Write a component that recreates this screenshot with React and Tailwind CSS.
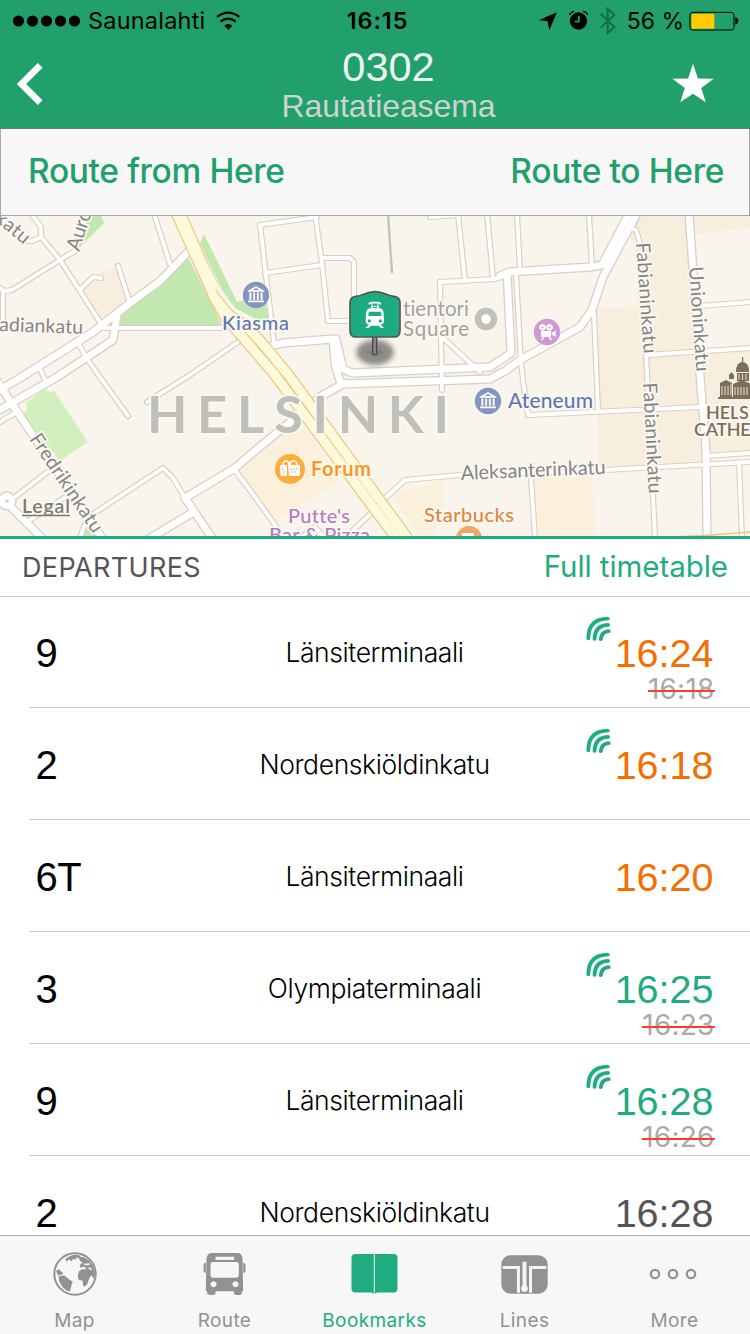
import React from "react";

const thin = [
  "32,215 41,227 41,237 60,260 100,322",
  "41,237 33,241 25,241",
  "0,288 4,291 12,290 60,260 75,251",
  "3,291 3,322",
  "80,290 93,277 101,278",
  "118,266 129,300",
  "154,214 170,264",
  "78,343 86,357 97,373 128,416",
  "40,369 46,382",
  "147,402 190,375 238,342",
  "0,422 15,413",
  "27,522 70,494",
  "15,497 50,470",
  "80,538 87,518 163,468 173,478 185,498",
  "233,468 250,490 275,525 283,538",
  "260,225 274,343",
  "260,225 317,217",
  "315,214 322,263 328,321 352,321",
  "265,273 322,265",
  "322,258 350,258 354,262 354,300",
  "430,217 458,215",
  "440,282 442,390",
  "440,282 495,279 502,276",
  "458,214 465,281",
  "487,214 493,278",
  "443,338 480,372",
  "517,214 520,270",
  "516,275 521,362 523,380 528,415 700,407",
  "589,214 592,267",
  "594,313 598,411",
  "630,228 636,230 640,243",
  "646,353 655,538",
  "647,355 750,348",
  "700,306 750,302",
  "706,456 750,453",
  "380,503 405,480 460,475 605,470 750,462",
  "739,462 742,538",
  "345,538 383,502",
  "531,478 535,538",
  "300,538 315,527 325,538",
  "100,328 225,328",
];

const wide = [
  "-4,392 20,378 93,332 130,303 160,281 190,250",
  "-4,412 57,377 113,340 117,315",
  "-2,382 12,404 102,538",
  "12,508 42,538",
  "185,498 212,538",
  "147,540 192,513",
  "185,498 235,468 250,455 307,408 323,395 345,383",
  "255,350 283,343 333,339 335,365 341,384 490,379 505,371 520,360 580,327 592,310 603,277 640,208",
  "336,339 343,369 352,373 490,367 511,353 507,273",
  "500,276 510,272 590,267 602,265 632,208",
  "689,214 693,270 700,375 706,450 707,538",
];

const highway = [
  "173,206 199,262 214,297 226,318 245,340 275,375 396,538",
  "214,297 228,314 248,328 262,343 288.5,375 407.5,538",
];

function Roads() {
  const layer = (list, color, w) =>
    list.map((p, i) => (
      <polyline key={color + w + i} points={p} fill="none" stroke={color} strokeWidth={w} strokeLinejoin="round" strokeLinecap="round" />
    ));
  return (
    <g>
      {layer(thin, "#d9d0c5", 6.2)}
      {layer(wide, "#d9d0c5", 9.4)}
      <circle cx="7" cy="501" r="9" fill="#fff" stroke="#d9d0c5" strokeWidth="1.4" />
      {layer(thin, "#ffffff", 3.8)}
      {layer(wide, "#ffffff", 6.8)}
      <circle cx="7" cy="501" r="1.8" fill="#d9d0c5" />
      <polyline points="177,210 200,262 212,288" fill="none" stroke="#f3c47c" strokeWidth="14.6" />
      {layer(highway, "#f3c47c", 11.6)}
      {layer(highway, "#fcfada", 9.2)}
      <polyline points="177,210 200,262 214,291" fill="none" stroke="#fcfada" strokeWidth="12.4" />
      <polyline points="388,214 392,273" fill="none" stroke="#c4c4c4" strokeWidth="2.4" />
      <polyline points="655,538 712,535 750,532" fill="none" stroke="#f3c47c" strokeWidth="1.5" />
    </g>
  );
}

function Label({ x, y, w, size, fill, weight = 400, rotate, children }) {
  return (
    <text
      x={x}
      y={y}
      textLength={w}
      fontSize={size}
      fontWeight={weight}
      fill={fill}
      stroke="#fbf8f2"
      strokeWidth="3.5"
      strokeLinejoin="round"
      paintOrder="stroke"
      transform={rotate ? `rotate(${rotate} ${x} ${y})` : undefined}
      style={{ fontFamily: 'Lato, "Open Sans", sans-serif', fontVariantLigatures: "none" }}
    >
      {children}
    </text>
  );
}

function Museum({ cx, cy }) {
  return (
    <g transform={`translate(${cx} ${cy})`}>
      <circle r="13.2" fill="#8694c0" />
      <g fill="#fff">
        <path d="M-8.3 -4.2 0 -9 8.3 -4.2v1h-16.6z" />
        <path d="M-6.6-2.6h2v7.4h-2zM-2.8-2.6h1.9v7.4h-1.9zM.9-2.6h1.9v7.4H.9zM4.6-2.6h2v7.4h-2zM-8 5.4H8v1.8H-8z" />
      </g>
      <path d="M-3.5-5 0-7 3.5-5z" fill="#8694c0" />
    </g>
  );
}

function TramPin() {
  return (
    <g transform="translate(250 210) scale(0.33333)">
      <ellipse cx="375" cy="427" rx="56" ry="38" fill="#555" opacity="0.65" filter="url(#soft)" />
      <ellipse cx="375" cy="427" rx="26" ry="7" fill="#777" opacity="0.7" />
      <rect x="368" y="378" width="12" height="56" fill="#858585" stroke="#4a4a4a" strokeWidth="4" />
      <path
        d="M318 259C338 259 346 245 375 245C404 245 412 259 432 259Q450 261 450 279V362Q450 381 431 381H319Q300 381 300 362V279Q300 261 318 259Z"
        fill="#1dab80"
        stroke="#555"
        strokeWidth="5"
      />
      <g fill="none" stroke="#fff" strokeWidth="5">
        <path d="M357 283Q359 278 365 278H384Q390 278 392 283" />
        <path d="M368 280 364 289H386L382 280" strokeWidth="3" />
        <path d="M366 289V297M384 289V297" />
      </g>
      <path
        fillRule="evenodd"
        fill="#fff"
        d="M360 295H390Q400 297 401 310L402 333Q402 342 392 344L402 354H393L386 347H363L356 354H346L357 344Q347 342 347 333L348 310Q349 297 360 295ZM358 305Q355 306 355 318H394Q394 306 391 305ZM358 328A5 5 0 1 0 358.1 328ZM391 328A5 5 0 1 0 391.1 328Z"
      />
    </g>
  );
}

function CityMap() {
  return (
    <svg viewBox="0 216 750 320" className="block h-[320px] w-full shrink-0 bg-[#f9f4ec]">
      <defs>
        <filter id="soft" x="-30%" y="-30%" width="160%" height="160%">
          <feGaussianBlur stdDeviation="8" />
        </filter>
      </defs>
      <g fill="#f7eedd">
        <path d="M83 290 95 275 117 266 128 298 134 293 100 322Z" />
        <path d="M642 214H750V228L694 234 702 350 750 348V453L706 455V466L599 466 594 309 637 307 638 260 630 235Z" />
      </g>
      <g fill="#fbf0da">
        <path d="M535 478 592 477 596 536H537Z" />
        <path d="M392 495 441 480 444 508 432 536H420Z" />
        <path d="M292 428 237 470 278 526 280 518 340 480 307 430Z" />
      </g>
      <g fill="#c2e7af">
        <path d="M188 257 160 282 130 305 106 325H222Z" />
        <path d="M204 234 200 243 222 290 235 308 267 325 268 317 265 295 252 298 237 302Z" />
        <path d="M88 216 77 250 104 223 101 216Z" />
        <path d="M84 529 100 528 106 536H80Z" />
      </g>
      <path d="M45 389 50 392 54 391 88 442 60 461 23 415 27 410 26 403Z" fill="#d2f0be" />
      <Roads />

      <Label x={147} y={433} w={302} size={52.5} weight={700} fill="#bfbfbb">HELSINKI</Label>
      <Label x={-6} y={220} w={39} size={19.5} fill="#858585" rotate={40}>katu</Label>
      <Label x={79} y={252} w={42} size={20} fill="#858585" rotate={-72}>Auro</Label>
      <Label x={-1} y={331} w={84} size={19.5} fill="#858585" rotate={2}>adiankatu</Label>
      <Label x={29} y={439} w={115} size={19.5} fill="#858585" rotate={56}>Fredrikinkatu</Label>
      <Label x={636} y={243} w={111} size={19.5} fill="#858585" rotate={86}>Fabianinkatu</Label>
      <Label x={643} y={383} w={111} size={19.5} fill="#858585" rotate={87}>Fabianinkatu</Label>
      <Label x={689} y={267} w={105} size={19.5} fill="#858585" rotate={86}>Unioninkatu</Label>
      <Label x={461} y={480} w={145} size={20} fill="#858585" rotate={-2.5}>Aleksanterinkatu</Label>

      <Museum cx={256} cy={295} />
      <Label x={222} y={330} w={67} size={20} weight={500} fill="#5f76b2">Kiasma</Label>
      <Museum cx={488} cy={401} />
      <Label x={508} y={408} w={85} size={21} weight={500} fill="#5f76b2">Ateneum</Label>

      <Label x={403} y={316} w={66} size={20.5} fill="#a2a19e">tientori</Label>
      <Label x={403} y={335.5} w={66} size={20.5} fill="#a2a19e">Square</Label>
      <circle cx="486" cy="319" r="8" fill="#fff" stroke="#c2c0ba" strokeWidth="6.4" />

      <circle cx="547" cy="332" r="13.2" fill="#ce9ad2" />
      <g fill="#fff">
        <path fillRule="evenodd" d="M542.5 324a3.4 3.4 0 1 0 .01 0zm0 2.4a1 1 0 1 1-.01 0zM549.5 324a3.4 3.4 0 1 0 .01 0zm0 2.4a1 1 0 1 1-.01 0z" />
        <path d="M541 331h10v6h-10zM551.7 333l4-2.5v6.5l-4-2.5z" />
        <path d="M544 337l-2.5 3M549 337l2.5 3" stroke="#fff" strokeWidth="1.3" />
      </g>

      <circle cx="290" cy="469" r="15" fill="#ffab3d" />
      <g fill="#fff">
        <path d="M280 465h7v11h-6.5zM288 465h12v9q0 2-2 2h-9z" />
        <path d="M283 465q0-4 3-4t3 4M290 465q0-4 3.5-4t3.5 4" fill="none" stroke="#fff" strokeWidth="1.5" />
      </g>
      <path d="M290 469h2M293 469h2M296 469h2M291 472h2M294 472h2M282 469h2M283 472h2" stroke="#ffab3d" strokeWidth="1.2" />
      <Label x={311} y={476} w={60} size={20} weight={700} fill="#f8981d">Forum</Label>

      <Label x={288} y={523} w={62} size={20} weight={500} fill="#b87cbd">Putte's</Label>
      <Label x={269} y={542} w={101} size={20} weight={500} fill="#b87cbd">Bar &amp; Pizza</Label>
      <Label x={424} y={522} w={90} size={20} weight={500} fill="#e0853c">Starbucks</Label>
      <circle cx="469" cy="539" r="13" fill="#f3a463" />
      <path d="M462 533h12v5h-12z" fill="#fff" />

      <g fill="#7b6f58">
        <path d="M736 372Q736 362 742.5 362T749 372zM742 357h1.2v5H742zM737 373h12v8h-12zM729 375l2.5-3 2.5 3v4h-5zM720 383l6-3 6 3v14h-12zM733 384l9-4 9 4v13h-18zM718 397h32v2h-32z" />
      </g>
      <path d="M722 386v9M725 386v9M728 386v9M731 384v11M735 387v8M738 387v8M741 387v8M744 387v8M747 387v8M739 374v6M742.5 374v6M746 374v6" stroke="#f7eedd" strokeWidth="0.9" />
      <Label x={706} y={419} w={48} size={18} weight={600} fill="#7b6f58">HELSI</Label>
      <Label x={694} y={436} w={70} size={18} weight={600} fill="#7b6f58">CATHED</Label>

      <Label x={22} y={513} w={48} size={19.5} weight={600} fill="#7b7b7b">Legal</Label>
      <path d="M22 515.5H70" stroke="#7b7b7b" strokeWidth="1.5" />
      <TramPin />
    </svg>
  );
}

function StatusBar() {
  return (
    <div className="grid h-10 grid-cols-[1fr_auto_1fr] items-center pl-[13px] pr-[11px] pt-[2px] font-['Inter',sans-serif] text-black">
      <div className="flex items-center">
        <svg viewBox="0 0 68 12" className="h-3 w-[68px]">
          {[5.5, 19.5, 33.5, 47.5, 61.5].map((x) => (
            <circle key={x} cx={x} cy="6" r="5.6" />
          ))}
        </svg>
        <span className="ml-[7px] text-[23.5px] leading-none tracking-[0.2px]">Saunalahti</span>
        <svg viewBox="648 30 76 58" className="-mt-[2px] ml-[11px] h-[19px] w-[25px]" fill="none" stroke="#000" strokeWidth="7">
          <path d="M651 48Q685 22 719 48" />
          <path d="M662 62Q685 45 708 62" />
          <path d="M673 75Q685 64 698 75L685.5 87Z" fill="#000" stroke="none" />
        </svg>
      </div>
      <div className="pl-[3px] text-[23.5px] font-semibold leading-none tracking-[0.9px]">16:15</div>
      <div className="flex items-center justify-end">
        <svg viewBox="488 20 235 84" className="h-7 w-[78px]">
          <path d="M490 60 545 36 522 90 517 63Z" />
          <circle cx="610" cy="62" r="26" />
          <path d="M583 44Q586 35 597 33M624 33Q635 35 638 44" fill="none" stroke="#000" strokeWidth="4" />
          <path d="M611 46V64H599" fill="none" stroke="#21a06c" strokeWidth="5" />
          <path d="M677 40 718 80 698 98V25L718 43 677 82" fill="none" stroke="#136b48" strokeWidth="6" />
        </svg>
        <span className="ml-[11px] text-[23px] leading-none">56 %</span>
        <svg viewBox="944 31 150 60" className="ml-[5px] h-5 w-[50px]">
          <rect x="947" y="35" width="132" height="53" rx="8" fill="none" stroke="#000" strokeWidth="3" />
          <rect x="951" y="39" width="69" height="45" rx="3" fill="#ffcc00" />
          <path d="M1083 50Q1092 53 1092 61T1083 72Z" />
        </svg>
      </div>
    </div>
  );
}

function Header() {
  return (
    <header className="h-[129px] shrink-0 border-b border-[#6d7d74] bg-[#21a06c]">
      <StatusBar />
      <div className="grid h-[88px] grid-cols-[100px_1fr_100px] items-center">
        <svg viewBox="48 186 80 132" className="ml-4 h-11 w-[27px]">
          <path d="M120 196 64 252 120 308" fill="none" stroke="#fff" strokeWidth="20" />
        </svg>
        <div className="flex flex-col items-center pb-1 pl-[27px] font-['Liberation_Sans',sans-serif]">
          <h1 className="mt-[6px] text-[41.5px] leading-[42px] text-[#edf3f0]">0302</h1>
          <h2 className="text-[32px] leading-[36px] tracking-[-0.1px] text-[#cfd3d0]">Rautatieasema</h2>
        </div>
        <svg viewBox="890 186 128 120" className="-mt-[2px] ml-[22px] h-10 w-[42px]">
          <path fill="#fff" d="M954 187 969 232 1017 233 979 261 993 305 954 279 915 305 929 261 891 233 939 232Z" />
        </svg>
      </div>
    </header>
  );
}

function Signal() {
  return (
    <svg viewBox="105 260 76 74" className="mr-1 mt-[18px] h-[25px] w-[25px]" fill="none" stroke="#1fac80" strokeWidth="12" strokeLinecap="round">
      <path d="M112 327Q112 268 171 267" />
      <path d="M131 328Q132 288 172 286" />
      <path d="M150 329Q152 307 174 305" />
    </svg>
  );
}

const departures = [
  { line: "9", to: "Länsiterminaali", time: "16:24", color: "text-[#f56e00]", was: "16:18", live: true },
  { line: "2", to: "Nordenskiöldinkatu", time: "16:18", color: "text-[#f56e00]", live: true },
  { line: "6T", to: "Länsiterminaali", time: "16:20", color: "text-[#f56e00]" },
  { line: "3", to: "Olympiaterminaali", time: "16:25", color: "text-[#1fac80]", was: "16:23", live: true },
  { line: "9", to: "Länsiterminaali", time: "16:28", color: "text-[#1fac80]", was: "16:26", live: true },
  { line: "2", to: "Nordenskiöldinkatu", time: "16:28", color: "text-[#555555]" },
];

function Departure({ d }) {
  return (
    <li className="shrink-0">
      <div className="grid h-[111px] grid-cols-[1fr_auto_1fr] pl-[35.5px] pr-[36.5px] pt-[2px]">
        <span className="self-center text-[40px] leading-none tracking-[-0.5px]">{d.line}</span>
        <span className="self-center font-['Inter',sans-serif] text-[26.5px] font-light leading-none tracking-[-0.4px]">{d.to}</span>
        <div className="flex justify-end">
          {d.live && <Signal />}
          <div className="flex flex-col items-end pt-[35px]">
            <span className={"text-[39.5px] leading-[40px] " + d.color}>{d.time}</span>
            {d.was && (
              <span className="relative -mr-px font-['Inter',sans-serif] text-[28px] leading-[33px] tracking-[0.2px] text-[#aaaaaa]">
                {d.was}
                <i className="absolute inset-x-0 top-[17px] h-[2px] bg-[#ff3b30]" />
              </span>
            )}
          </div>
        </div>
      </div>
      <div className="ml-[30px] h-px bg-[#c8c7cc]" />
    </li>
  );
}

function Globe() {
  return (
    <svg viewBox="159 66 132 132" className="h-11 w-11">
      <circle cx="225" cy="132" r="62" fill="none" stroke="#929292" strokeWidth="6" />
      <g fill="#929292">
        <path d="M196 88 206 80 216 76 228 74 242 77 238 86 230 82 226 90 220 86 214 94 206 88 200 96Z" />
        <path d="M236 80 252 82 268 92 278 106 284 122 284 140 280 145 274 136 270 141 266 150 262 162 254 170 249 166 248 152 236 149 233 136 237 124 246 118 258 118 256 112 248 110 241 114 240 104 248 98 240 92Z" />
        <path d="M168 122 176 118 190 130 184 134 174 136Z" />
        <path d="M176 139 192 136 206 147 218 155 214 168 210 184 200 182 188 172 178 156Z" />
      </g>
      <path d="M250 101 268 100 270 105 254 106ZM262 112 274 114 276 122 268 118Z" fill="#f7f7f7" />
    </svg>
  );
}

function BusIcon() {
  return (
    <svg viewBox="611 66 128 132" className="h-11 w-[43px]">
      <path
        fill="#929292"
        fillRule="evenodd"
        d="M638 69H713Q728 69 729 86L731 184H727V189Q727 195 715 195T703 189V184H648V189Q648 195 635 195T623 189V184H619L621 86Q622 69 638 69ZM648 80V90H704V80ZM640 96Q633 96 633 103V136Q633 143 640 143H711Q718 143 718 136V103Q718 96 711 96ZM642 154A9 9 0 1 0 642.1 154ZM708 154A9 9 0 1 0 708.1 154Z"
      />
      <path d="M619 98Q612 98 612 106V122Q612 128 619 129ZM731 98Q738 98 738 106V122Q738 128 731 129Z" fill="#929292" />
    </svg>
  );
}

function BookIcon() {
  return (
    <svg viewBox="0 0 47 42" className="h-[42px] w-[47px]" fill="#1fac80">
      <path d="M4.5 1H22.8V41Q21.5 39.6 19 39.6H4.5Q.5 39.6.5 35.6V5Q.5 1 4.5 1ZM42.5 1H23.8V41Q25 39.6 27.5 39.6H42.5Q46.5 39.6 46.5 35.6V5Q46.5 1 42.5 1Z" />
    </svg>
  );
}

function LinesIcon() {
  return (
    <svg viewBox="380 74 140 116" className="h-[39px] w-[47px]">
      <rect x="381" y="75" width="138" height="114" rx="27" fill="#929292" />
      <g fill="none" stroke="#f4f4f4" strokeWidth="9">
        <path d="M385 111H432V186M515 111H468V186" />
        <path d="M450 94V172" strokeWidth="12" />
      </g>
      <circle cx="450" cy="174" r="10" fill="#f4f4f4" />
    </svg>
  );
}

function MoreIcon() {
  return (
    <svg viewBox="0 0 48 12" className="mr-[3px] h-3 w-12" fill="none" stroke="#929292" strokeWidth="2.2">
      <circle cx="6" cy="6" r="4.2" />
      <circle cx="24" cy="6" r="4.2" />
      <circle cx="42" cy="6" r="4.2" />
    </svg>
  );
}

const tabs = [
  { name: "Map", icon: <Globe /> },
  { name: "Route", icon: <BusIcon /> },
  { name: "Bookmarks", icon: <BookIcon />, active: true },
  { name: "Lines", icon: <LinesIcon /> },
  { name: "More", icon: <MoreIcon /> },
];

export default function App() {
  return (
    <div className="flex h-[1334px] w-[750px] flex-col overflow-hidden bg-white font-['Liberation_Sans',sans-serif]">
      <Header />
      <div className="flex h-[87px] shrink-0 items-center justify-between border border-t-0 border-[#a7a7a7] bg-[#f7f7f7] pb-px pl-[27px] pr-[25px] font-['Inter',sans-serif] text-[33.5px] font-medium tracking-[-0.35px] text-[#21a06c]">
        <span>Route from Here</span>
        <span>Route to Here</span>
      </div>
      <CityMap />
      <section className="flex h-[61px] shrink-0 items-center justify-between border-b border-t-[3px] border-b-[#c8c7cc] border-t-[#1fac80] pb-px pl-[22px] pr-[22px] font-['Inter',sans-serif]">
        <h3 className="text-[27px] leading-none tracking-[0.35px] text-[#555555]">DEPARTURES</h3>
        <a className="text-[29.5px] leading-none tracking-[-0.05px] text-[#1fac80]">Full timetable</a>
      </section>
      <ul className="-mt-px flex min-h-0 flex-1 flex-col overflow-hidden text-black">
        {departures.map((d, i) => (
          <Departure key={i} d={d} />
        ))}
      </ul>
      <nav className="grid h-[99px] shrink-0 grid-cols-5 border-t border-[#adadad] bg-[#f7f7f7] font-['Inter',sans-serif]">
        {tabs.map((t) => (
          <div key={t.name} className={"flex flex-col items-center pr-px " + (t.active ? "text-[#1fac80]" : "text-[#929292]")}>
            <div className="flex h-[76px] items-center">{t.icon}</div>
            <span className="-mt-px text-[19px] leading-none tracking-[0.4px]">{t.name}</span>
          </div>
        ))}
      </nav>
    </div>
  );
}
